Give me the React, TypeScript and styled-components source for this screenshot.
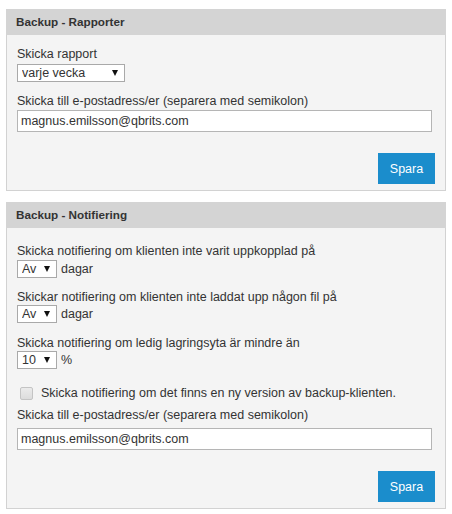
import React from "react";
import styled, { createGlobalStyle } from "styled-components";

const Global = createGlobalStyle`
  html, body { margin: 0; padding: 0; background: #ffffff; }
  body { font-family: "Liberation Sans", Arial, sans-serif; font-size: 12.5px; color: #333333; }
  * { box-sizing: border-box; }
`;

const Page = styled.div`
  padding: 9px 6px 0 6px;
  width: 452px;
  display: flex;
  flex-direction: column;
  gap: 11px;
`;

const Panel = styled.section`
  width: 440px;
  background: #f4f4f4;
  border: 1px solid #d2d2d2;
  border-top: none;
`;

const Header = styled.h2`
  margin: 0 -1px;
  height: 26px;
  background: #d4d4d4;
  font-size: 11.7px;
  font-weight: bold;
  color: #333333;
  line-height: 26px;
  padding-left: 10px;
`;

const Body = styled.div<{ $top: number }>`
  padding: ${(p) => p.$top}px 10px 6px 10px;
  display: flex;
  flex-direction: column;
`;

const Group = styled.div<{ $gap?: number }>`
  display: flex;
  flex-direction: column;
  align-items: flex-start;
  margin-bottom: ${(p) => p.$gap ?? 12}px;
`;

const Label = styled.label<{ $mb?: number }>`
  display: block;
  line-height: 15px;
  margin-bottom: ${(p) => p.$mb ?? 1}px;
`;

const Row = styled.div`
  display: flex;
  align-items: center;
  gap: 4px;
`;

const SelectWrap = styled.div<{ $w: number }>`
  position: relative;
  width: ${(p) => p.$w}px;
  height: 18px;
`;

const Select = styled.select`
  appearance: none;
  -webkit-appearance: none;
  width: 100%;
  height: 100%;
  margin: 0;
  border: 1px solid #a9a9a9;
  border-radius: 0;
  background: #ffffff;
  font-family: "Liberation Sans", Arial, sans-serif;
  font-size: 12.5px;
  color: #333333;
  padding: 0 0 0 4px;
  outline: none;
`;

const Arrow = styled.svg`
  position: absolute;
  right: 7px;
  top: 6px;
  width: 6px;
  height: 6px;
  pointer-events: none;
`;

const Unit = styled.span`
  line-height: 18px;
`;

const TextInput = styled.input`
  width: 415px;
  height: 22px;
  margin: 0;
  border: 1px solid #b5b5b5;
  background: #ffffff;
  font-family: "Liberation Sans", Arial, sans-serif;
  font-size: 12.5px;
  color: #333333;
  padding: 0 0 0 3px;
  outline: none;
`;

const CheckRow = styled.label`
  display: flex;
  align-items: center;
  gap: 8px;
  padding-left: 3px;
  line-height: 15px;
  margin-bottom: 7px;
`;

const Check = styled.input`
  appearance: none;
  -webkit-appearance: none;
  margin: 0;
  width: 13px;
  height: 13px;
  border: 1px solid #c4c4c4;
  border-radius: 2px;
  background: linear-gradient(#ebebeb, #dcdcdc);
`;

const Footer = styled.div`
  display: flex;
  justify-content: flex-end;
`;

const Button = styled.button`
  width: 57px;
  height: 31px;
  border: none;
  background: #1b8dcc;
  color: #ffffff;
  font-family: "Liberation Sans", Arial, sans-serif;
  font-size: 12.5px;
  padding: 0;
  cursor: pointer;
`;

function Dropdown({ width, value, options }: { width: number; value: string; options: string[] }) {
  return (
    <SelectWrap $w={width}>
      <Select defaultValue={value}>
        {options.map((o) => (
          <option key={o}>{o}</option>
        ))}
      </Select>
      <Arrow viewBox="0 0 6 6">
        <path d="M0 0 H6 L3 6 Z" fill="#111" />
      </Arrow>
    </SelectWrap>
  );
}

export default function App() {
  return (
    <>
      <Global />
      <Page>
        <Panel>
          <Header>Backup - Rapporter</Header>
          <Body $top={12}>
            <Group $gap={12}>
              <Label $mb={2}>Skicka rapport</Label>
              <Dropdown width={108} value="varje vecka" options={["varje dag", "varje vecka", "varje månad"]} />
            </Group>
            <Group $gap={21}>
              <Label>Skicka till e-postadress/er (separera med semikolon)</Label>
              <TextInput defaultValue="magnus.emilsson@qbrits.com" />
            </Group>
            <Footer>
              <Button>Spara</Button>
            </Footer>
          </Body>
        </Panel>
        <Panel>
          <Header>Backup - Notifiering</Header>
          <Body $top={16}>
            <Group $gap={12}>
              <Label>Skicka notifiering om klienten inte varit uppkopplad på</Label>
              <Row>
                <Dropdown width={40} value="Av" options={["Av", "1", "2", "3", "7"]} />
                <Unit>dagar</Unit>
              </Row>
            </Group>
            <Group $gap={13}>
              <Label $mb={0}>Skickar notifiering om klienten inte laddat upp någon fil på</Label>
              <Row>
                <Dropdown width={40} value="Av" options={["Av", "1", "2", "3", "7"]} />
                <Unit>dagar</Unit>
              </Row>
            </Group>
            <Group $gap={17}>
              <Label $mb={0}>Skicka notifiering om ledig lagringsyta är mindre än</Label>
              <Row>
                <Dropdown width={40} value="10" options={["5", "10", "20"]} />
                <Unit>%</Unit>
              </Row>
            </Group>
            <CheckRow>
              <Check type="checkbox" />
              Skicka notifiering om det finns en ny version av backup-klienten.
            </CheckRow>
            <Group $gap={21}>
              <Label $mb={5}>Skicka till e-postadress/er (separera med semikolon)</Label>
              <TextInput defaultValue="magnus.emilsson@qbrits.com" />
            </Group>
            <Footer>
              <Button>Spara</Button>
            </Footer>
          </Body>
        </Panel>
      </Page>
    </>
  );
}
